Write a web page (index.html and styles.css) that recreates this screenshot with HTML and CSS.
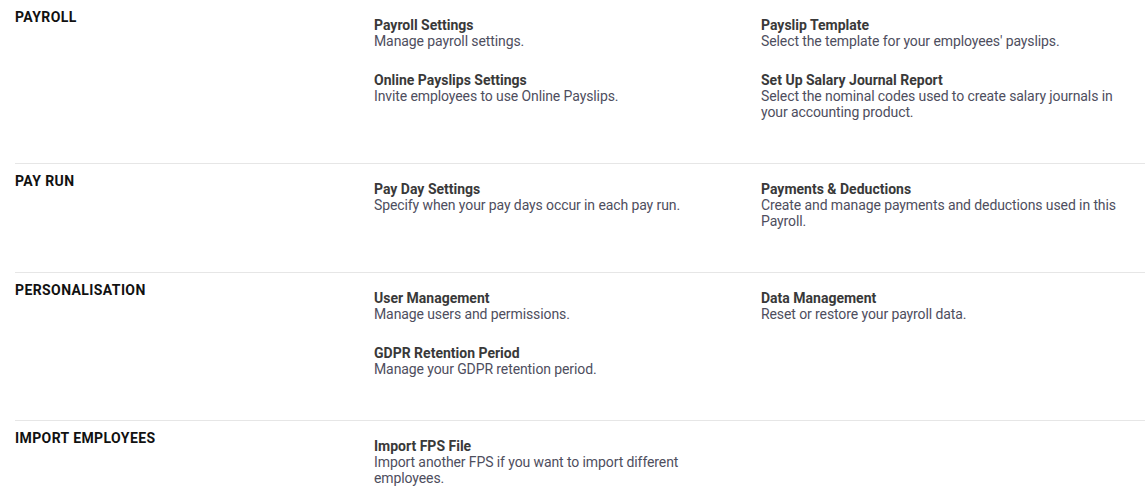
FILE: index.html
```html
<!DOCTYPE html>
<html lang="en">
<head>
    <meta charset="UTF-8">
    <meta name="viewport" content="width=device-width, initial-scale=1.0">
    <title>Settings</title>
    <link rel="stylesheet" href="styles.css">
</head>
<body>
    <div class="section">
        <h2>PAYROLL</h2>
        <div class="items">
            <div class="item">
                <h3>Payroll Settings</h3>
                <p>Manage payroll settings.</p>
            </div>
            <div class="item">
                <h3>Payslip Template</h3>
                <p>Select the template for your employees' payslips.</p>
            </div>
            <div class="item">
                <h3>Online Payslips Settings</h3>
                <p>Invite employees to use Online Payslips.</p>
            </div>
            <div class="item">
                <h3>Set Up Salary Journal Report</h3>
                <p>Select the nominal codes used to create salary journals in your accounting product.</p>
            </div>
        </div>
    </div>

    <div class="section">
        <h2>PAY RUN</h2>
        <div class="items">
            <div class="item">
                <h3>Pay Day Settings</h3>
                <p>Specify when your pay days occur in each pay run.</p>
            </div>
            <div class="item">
                <h3>Payments &amp; Deductions</h3>
                <p>Create and manage payments and deductions used in this Payroll.</p>
            </div>
        </div>
    </div>

    <div class="section">
        <h2>PERSONALISATION</h2>
        <div class="items">
            <div class="item">
                <h3>User Management</h3>
                <p>Manage users and permissions.</p>
            </div>
            <div class="item">
                <h3>Data Management</h3>
                <p>Reset or restore your payroll data.</p>
            </div>
            <div class="item">
                <h3>GDPR Retention Period</h3>
                <p>Manage your GDPR retention period.</p>
            </div>
        </div>
    </div>

    <div class="section">
        <h2>IMPORT EMPLOYEES</h2>
        <div class="items">
            <div class="item">
                <h3>Import FPS File</h3>
                <p>Import another FPS if you want to import different employees.</p>
            </div>
        </div>
    </div>
</body>
</html>
```

FILE: styles.css
```css
body {
    font-family: Roboto, "Liberation Sans", sans-serif;
    font-size: 14px;
    line-height: 16px;
    margin: 0;
    background: #fff;
}
.section {
    display: flex;
    margin-left: 15px;
    padding: 9px 0 20px;
    border-top: 1px solid #e6e6e6;
}
.section:first-child {
    border-top: none;
}
.section:last-child {
    padding-bottom: 0;
}
.section h2 {
    width: 359px;
    flex-shrink: 0;
    margin: 0;
    font-size: 14px;
    line-height: 16px;
    font-weight: bold;
    letter-spacing: 0.4px;
    color: #111;
}
.items {
    display: grid;
    grid-template-columns: 363px 363px;
    column-gap: 24px;
    margin-top: 8px;
}
.item {
    margin-bottom: 23px;
}
.section:last-child .item {
    margin-bottom: 0;
}
.item h3 {
    margin: 0;
    font-size: 14px;
    line-height: 16px;
    font-weight: bold;
    color: #393939;
}
.item p {
    margin: 0;
    letter-spacing: -0.1px;
    color: #4e4e5e;
}
```
